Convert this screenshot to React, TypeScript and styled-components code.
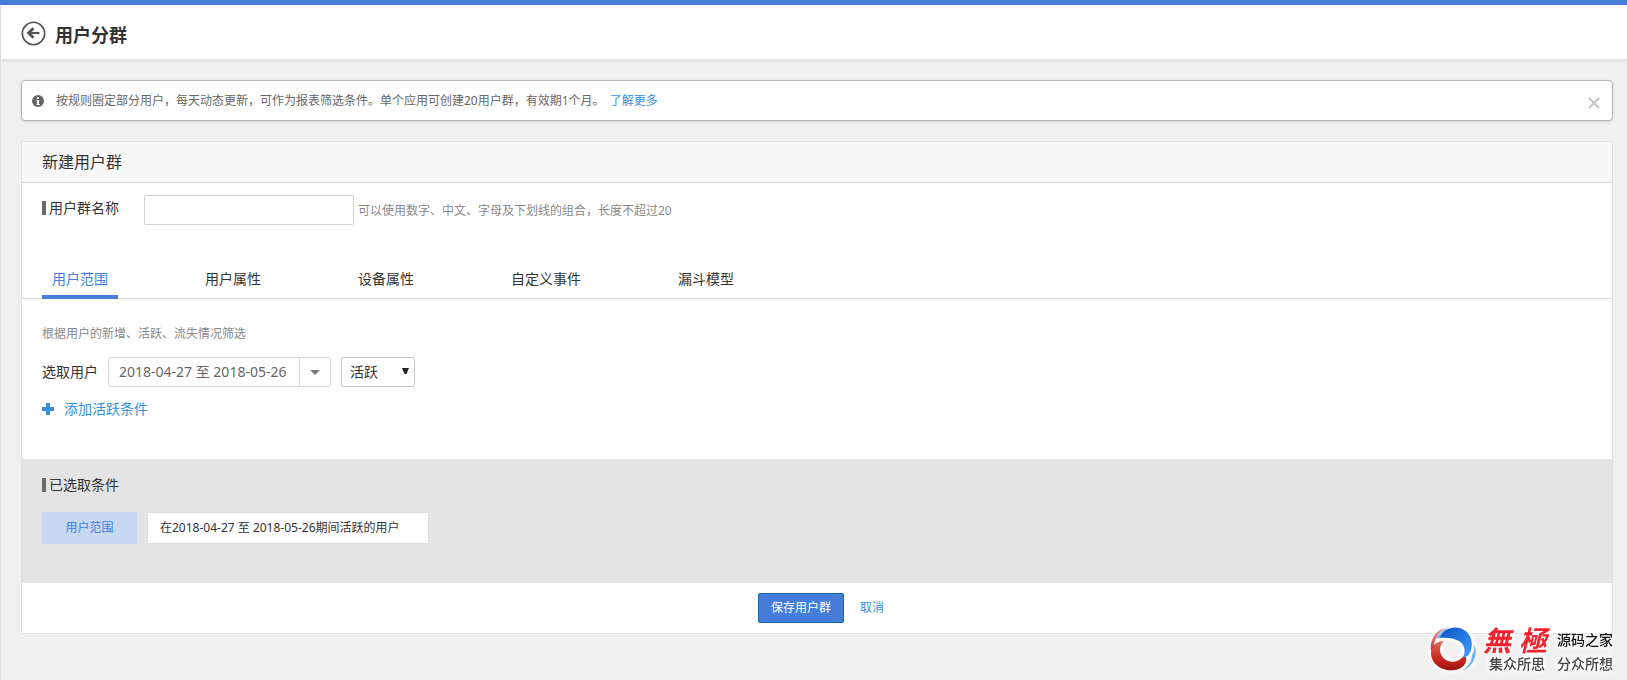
import React, { useState } from "react";
import styled, { createGlobalStyle } from "styled-components";

const GlobalStyle = createGlobalStyle`
  *, *::before, *::after { box-sizing: border-box; }
  body {
    margin: 0;
    background: #f0f0f0;
    color: #333;
    font: 14px/20px "Noto Sans", "Noto Sans CJK SC", sans-serif;
  }
  button, input, select { font: inherit; color: inherit; }
  h1, h2, h3, p { margin: 0; font-weight: 400; }
`;

const Page = styled.div`
  min-height: 100vh;
  display: flex;
  flex-direction: column;
  border-top: 5px solid #447ed9;
`;

const Body = styled.div`
  flex: 1;
  border-left: 1px solid #e0e0e0;
`;

const Header = styled.header`
  display: flex;
  align-items: center;
  gap: 9px;
  height: 55px;
  padding: 3px 20px 0;
  background: #fff;
  border-bottom: 1px solid #e0e0e0;
  box-shadow: 0 1px 4px rgba(0, 0, 0, 0.08);
`;

const Title = styled.h1`
  padding-top: 2px;
  font-size: 18px;
  line-height: 24px;
  font-weight: 700;
`;

const IconButton = styled.button`
  display: flex;
  padding: 0;
  border: 0;
  background: none;
  cursor: pointer;
`;

const Main = styled.main`
  display: flex;
  flex-direction: column;
  gap: 20px;
  padding: 20px 14px 20px 20px;
`;

const Notice = styled.div`
  display: flex;
  align-items: center;
  height: 41px;
  padding: 0 12px 0 10px;
  background: #fff;
  border: 1px solid #b5b5b5;
  border-radius: 4px;
  box-shadow: 0 1px 3px rgba(0, 0, 0, 0.12);
  font-size: 12px;
  color: #666;
`;

const NoticeText = styled.p`
  flex: 1;
  margin-left: 12px;
`;

const CloseButton = styled(IconButton)`
  margin-top: 4px;
`;

const Link = styled.a`
  color: #338fe0;
  text-decoration: none;
`;

const NoticeLink = styled(Link)`
  margin-left: 2px;
`;

const Panel = styled.section`
  background: #fff;
  border: 1px solid #e0e0e0;
`;

const PanelTitle = styled.h2`
  height: 41px;
  padding-left: 20px;
  background: #f9f9f9;
  border-bottom: 1px solid #d9d9d9;
  font-size: 16px;
  line-height: 40px;
`;

const NameRow = styled.div`
  display: flex;
  align-items: center;
  padding: 12px 20px 0;
`;

const barMark = `
  display: flex;
  align-items: center;
  gap: 3px;
  &::before {
    content: "";
    width: 4px;
    height: 14px;
    background: #6b6b6b;
  }
`;

const NameLabel = styled.label`
  ${barMark}
  width: 102px;
  margin-bottom: 4px;
`;

const NameInput = styled.input`
  width: 210px;
  height: 30px;
  padding: 0 8px;
  border: 1px solid #d2d2d2;
  border-radius: 2px;
  background: #fff;
`;

const Hint = styled.p`
  font-size: 12px;
  color: #888;
`;

const NameHint = styled(Hint)`
  margin: 2px 0 0 4px;
`;

const Tabs = styled.nav`
  display: flex;
  gap: 77px;
  margin-top: 33px;
  padding: 0 20px;
  border-bottom: 1px solid #e0e0e0;
`;

const Tab = styled.button<{ $active: boolean }>`
  height: 41px;
  margin-bottom: -1px;
  padding: 4px 10px 0;
  border: 0;
  border-bottom: 4px solid ${(p) => (p.$active ? "#447ed9" : "transparent")};
  background: none;
  color: ${(p) => (p.$active ? "#447ed9" : "#333")};
  cursor: pointer;
`;

const Filters = styled.div`
  padding: 25px 20px 40px;
`;

const FilterRow = styled.div`
  display: flex;
  align-items: center;
  gap: 10px;
  margin-top: 13px;
`;

const DateButton = styled.button`
  display: flex;
  align-items: center;
  height: 30px;
  padding: 0;
  border: 1px solid #d8d8d8;
  border-radius: 3px;
  background: #fff;
  color: #666;
  cursor: pointer;
`;

const DateText = styled.span`
  min-width: 190px;
  padding: 0 10px;
  text-align: left;
`;

const Caret = styled.span`
  display: flex;
  align-items: center;
  justify-content: center;
  width: 31px;
  height: 28px;
  border-left: 1px solid #d8d8d8;
`;

const SelectWrap = styled.div`
  display: grid;
  align-items: center;
  width: 74px;
  > * { grid-area: 1 / 1; }
  > svg { justify-self: end; margin: 0 6px 2px 0; pointer-events: none; }
`;

const Select = styled.select`
  appearance: none;
  width: 100%;
  height: 30px;
  padding: 0 20px 0 8px;
  border: 1px solid #c8c8c8;
  border-radius: 2px;
  background: #fff;
`;

const AddButton = styled.button`
  display: flex;
  align-items: center;
  gap: 10px;
  margin-top: 12px;
  padding: 0;
  border: 0;
  background: none;
  color: #338fe0;
  cursor: pointer;
`;

const Chosen = styled.section`
  padding: 16px 20px 39px;
  background: #e4e4e4;
`;

const ChosenTitle = styled.h3`
  ${barMark}
  font-size: 14px;
  line-height: 20px;
`;

const ChosenRow = styled.div`
  display: flex;
  gap: 10px;
  margin-top: 17px;
  font-size: 12px;
  line-height: 32px;
`;

const Tag = styled.span`
  width: 95px;
  text-align: center;
  background: #c7d8f3;
  color: #447ed9;
`;

const Condition = styled.span`
  width: 282px;
  height: 32px;
  padding-left: 12px;
  border: 1px solid #dcdcdc;
  border-radius: 2px;
  background: #fff;
  line-height: 30px;
`;

const Footer = styled.footer`
  display: flex;
  align-items: center;
  justify-content: center;
  gap: 16px;
  height: 50px;
  padding-left: 8px;
  font-size: 12px;
`;

const SaveButton = styled.button`
  height: 30px;
  padding: 0 12px;
  border: 1px solid #1d62a8;
  border-radius: 2px;
  background: #447ed9;
  color: #fff;
  cursor: pointer;
`;

const Watermark = styled.aside`
  position: fixed;
  right: 14px;
  bottom: 8px;
  display: flex;
  align-items: center;
  gap: 7px;
  filter: drop-shadow(0 0 2px #fff) drop-shadow(0 0 3px #fff);
`;

const Brand = styled.div`
  display: flex;
  align-items: center;
  gap: 4px;
`;

const Calligraphy = styled.strong`
  display: flex;
  gap: 8px;
  padding-right: 6px;
  color: #f5222d;
  font-size: 28px;
  line-height: 28px;
  font-weight: 700;
  font-style: italic;
`;

const Slogan = styled.div`
  display: flex;
  justify-content: space-between;
  padding: 2px 0 0 6px;
  font-size: 14px;
  line-height: 16px;
  font-weight: 500;
  color: #444;
`;

const SiteName = styled.span`
  color: #111;
  font-weight: 500;
`;

const tabs = ["用户范围", "用户属性", "设备属性", "自定义事件", "漏斗模型"];

export default function App() {
  const [active, setActive] = useState(0);
  return (
    <Page>
      <GlobalStyle />
      <Body>
        <Header>
          <IconButton aria-label="返回">
            <svg width="25" height="25" viewBox="0 0 25 25" fill="none" stroke="#555">
              <circle cx="12.5" cy="12.5" r="11.2" strokeWidth="1.6" />
              <path d="M18.5 12H8" strokeWidth="2.2" />
              <path d="M12.5 7.2L7.5 12l5 4.8" strokeWidth="2.8" />
            </svg>
          </IconButton>
          <Title>用户分群</Title>
        </Header>
        <Main>
          <Notice>
            <svg width="12" height="12" viewBox="0 0 12 12">
              <circle cx="6" cy="6" r="6" fill="#666" />
              <path d="M5 2h2v2H5zM4.500 5H7v4h.8v1H4.500V9H5V6h-.5z" fill="#fff" />
            </svg>
            <NoticeText>
              按规则圈定部分用户，每天动态更新，可作为报表筛选条件。单个应用可创建20用户群，有效期1个月。{" "}
              <NoticeLink href="#more">了解更多</NoticeLink>
            </NoticeText>
            <CloseButton aria-label="关闭">
              <svg width="12" height="12" viewBox="0 0 12 12" stroke="#c6c6c6" strokeWidth="2">
                <path d="M1 1l10 10M11 1L1 11" />
              </svg>
            </CloseButton>
          </Notice>
          <Panel>
            <PanelTitle>新建用户群</PanelTitle>
            <NameRow>
              <NameLabel htmlFor="group-name">用户群名称</NameLabel>
              <NameInput id="group-name" type="text" />
              <NameHint>可以使用数字、中文、字母及下划线的组合，长度不超过20</NameHint>
            </NameRow>
            <Tabs>
              {tabs.map((t, i) => (
                <Tab key={t} $active={i === active} onClick={() => setActive(i)}>
                  {t}
                </Tab>
              ))}
            </Tabs>
            <Filters>
              <Hint>根据用户的新增、活跃、流失情况筛选</Hint>
              <FilterRow>
                <label htmlFor="user-kind">选取用户</label>
                <DateButton>
                  <DateText>2018-04-27 至 2018-05-26</DateText>
                  <Caret>
                    <svg width="10" height="5" viewBox="0 0 10 5">
                      <path d="M0 0h10L5 5z" fill="#777" />
                    </svg>
                  </Caret>
                </DateButton>
                <SelectWrap>
                  <Select id="user-kind" defaultValue="活跃">
                    <option>活跃</option>
                    <option>新增</option>
                    <option>流失</option>
                  </Select>
                  <svg width="7" height="6" viewBox="0 0 7 6">
                    <path d="M0 0h7L4.500 6h-2z" fill="#222" />
                  </svg>
                </SelectWrap>
              </FilterRow>
              <AddButton>
                <svg width="12" height="12" viewBox="0 0 12 12">
                  <path d="M4 0h4v4h4v4H8v4H4V8H0V4h4z" fill="#338fe0" />
                </svg>
                添加活跃条件
              </AddButton>
            </Filters>
            <Chosen>
              <ChosenTitle>已选取条件</ChosenTitle>
              <ChosenRow>
                <Tag>用户范围</Tag>
                <Condition>在2018-04-27 至 2018-05-26期间活跃的用户</Condition>
              </ChosenRow>
            </Chosen>
            <Footer>
              <SaveButton>保存用户群</SaveButton>
              <Link href="#cancel">取消</Link>
            </Footer>
          </Panel>
        </Main>
      </Body>
      <Watermark>
        <svg width="46" height="46" viewBox="0 0 46 46">
          <defs>
            <linearGradient id="red" x1="0" y1="0" x2="0" y2="1">
              <stop offset="0" stopColor="#e8685c" />
              <stop offset="0.6" stopColor="#c8271f" />
              <stop offset="1" stopColor="#9c120c" />
            </linearGradient>
            <linearGradient id="blue" x1="0" y1="0" x2="1" y2="1">
              <stop offset="0" stopColor="#0a4fc4" />
              <stop offset="1" stopColor="#3fa0ff" />
            </linearGradient>
          </defs>
          <path d="M14 15C8 20 9 30 16 34c7 4 15 1 19-6 4 8-2 15-10 16C14 46 1 39 1 27c0-7 5-12 13-12z" fill="url(#red)" />
          <path d="M1 25C-1 15 6 4 15 2 8 7 4 14 4 20c-1 1-2 3-3 5z" fill="url(#red)" opacity="0.75" />
          <path d="M9 12C13 3 22 0 30 2c9 3 14 12 11 22-1 4-4 7-8 8 3-7 2-13-4-17-5-3-13-4-20-3z" fill="url(#blue)" />
          <path d="M44 18c5 11-2 24-11 26 6-4 9-9 9-15 2-3 3-7 2-11z" fill="#4a9cf0" opacity="0.8" />
          <path d="M6 13C9 6 14 3 19 1c-5 4-7 7-9 11z" fill="#58a8f5" opacity="0.7" />
        </svg>
        <div>
          <Brand>
            <Calligraphy>
              <span>無</span>
              <span>極</span>
            </Calligraphy>
            <SiteName>源码之家</SiteName>
          </Brand>
          <Slogan>
            <span>集众所思</span>
            <span>分众所想</span>
          </Slogan>
        </div>
      </Watermark>
    </Page>
  );
}
